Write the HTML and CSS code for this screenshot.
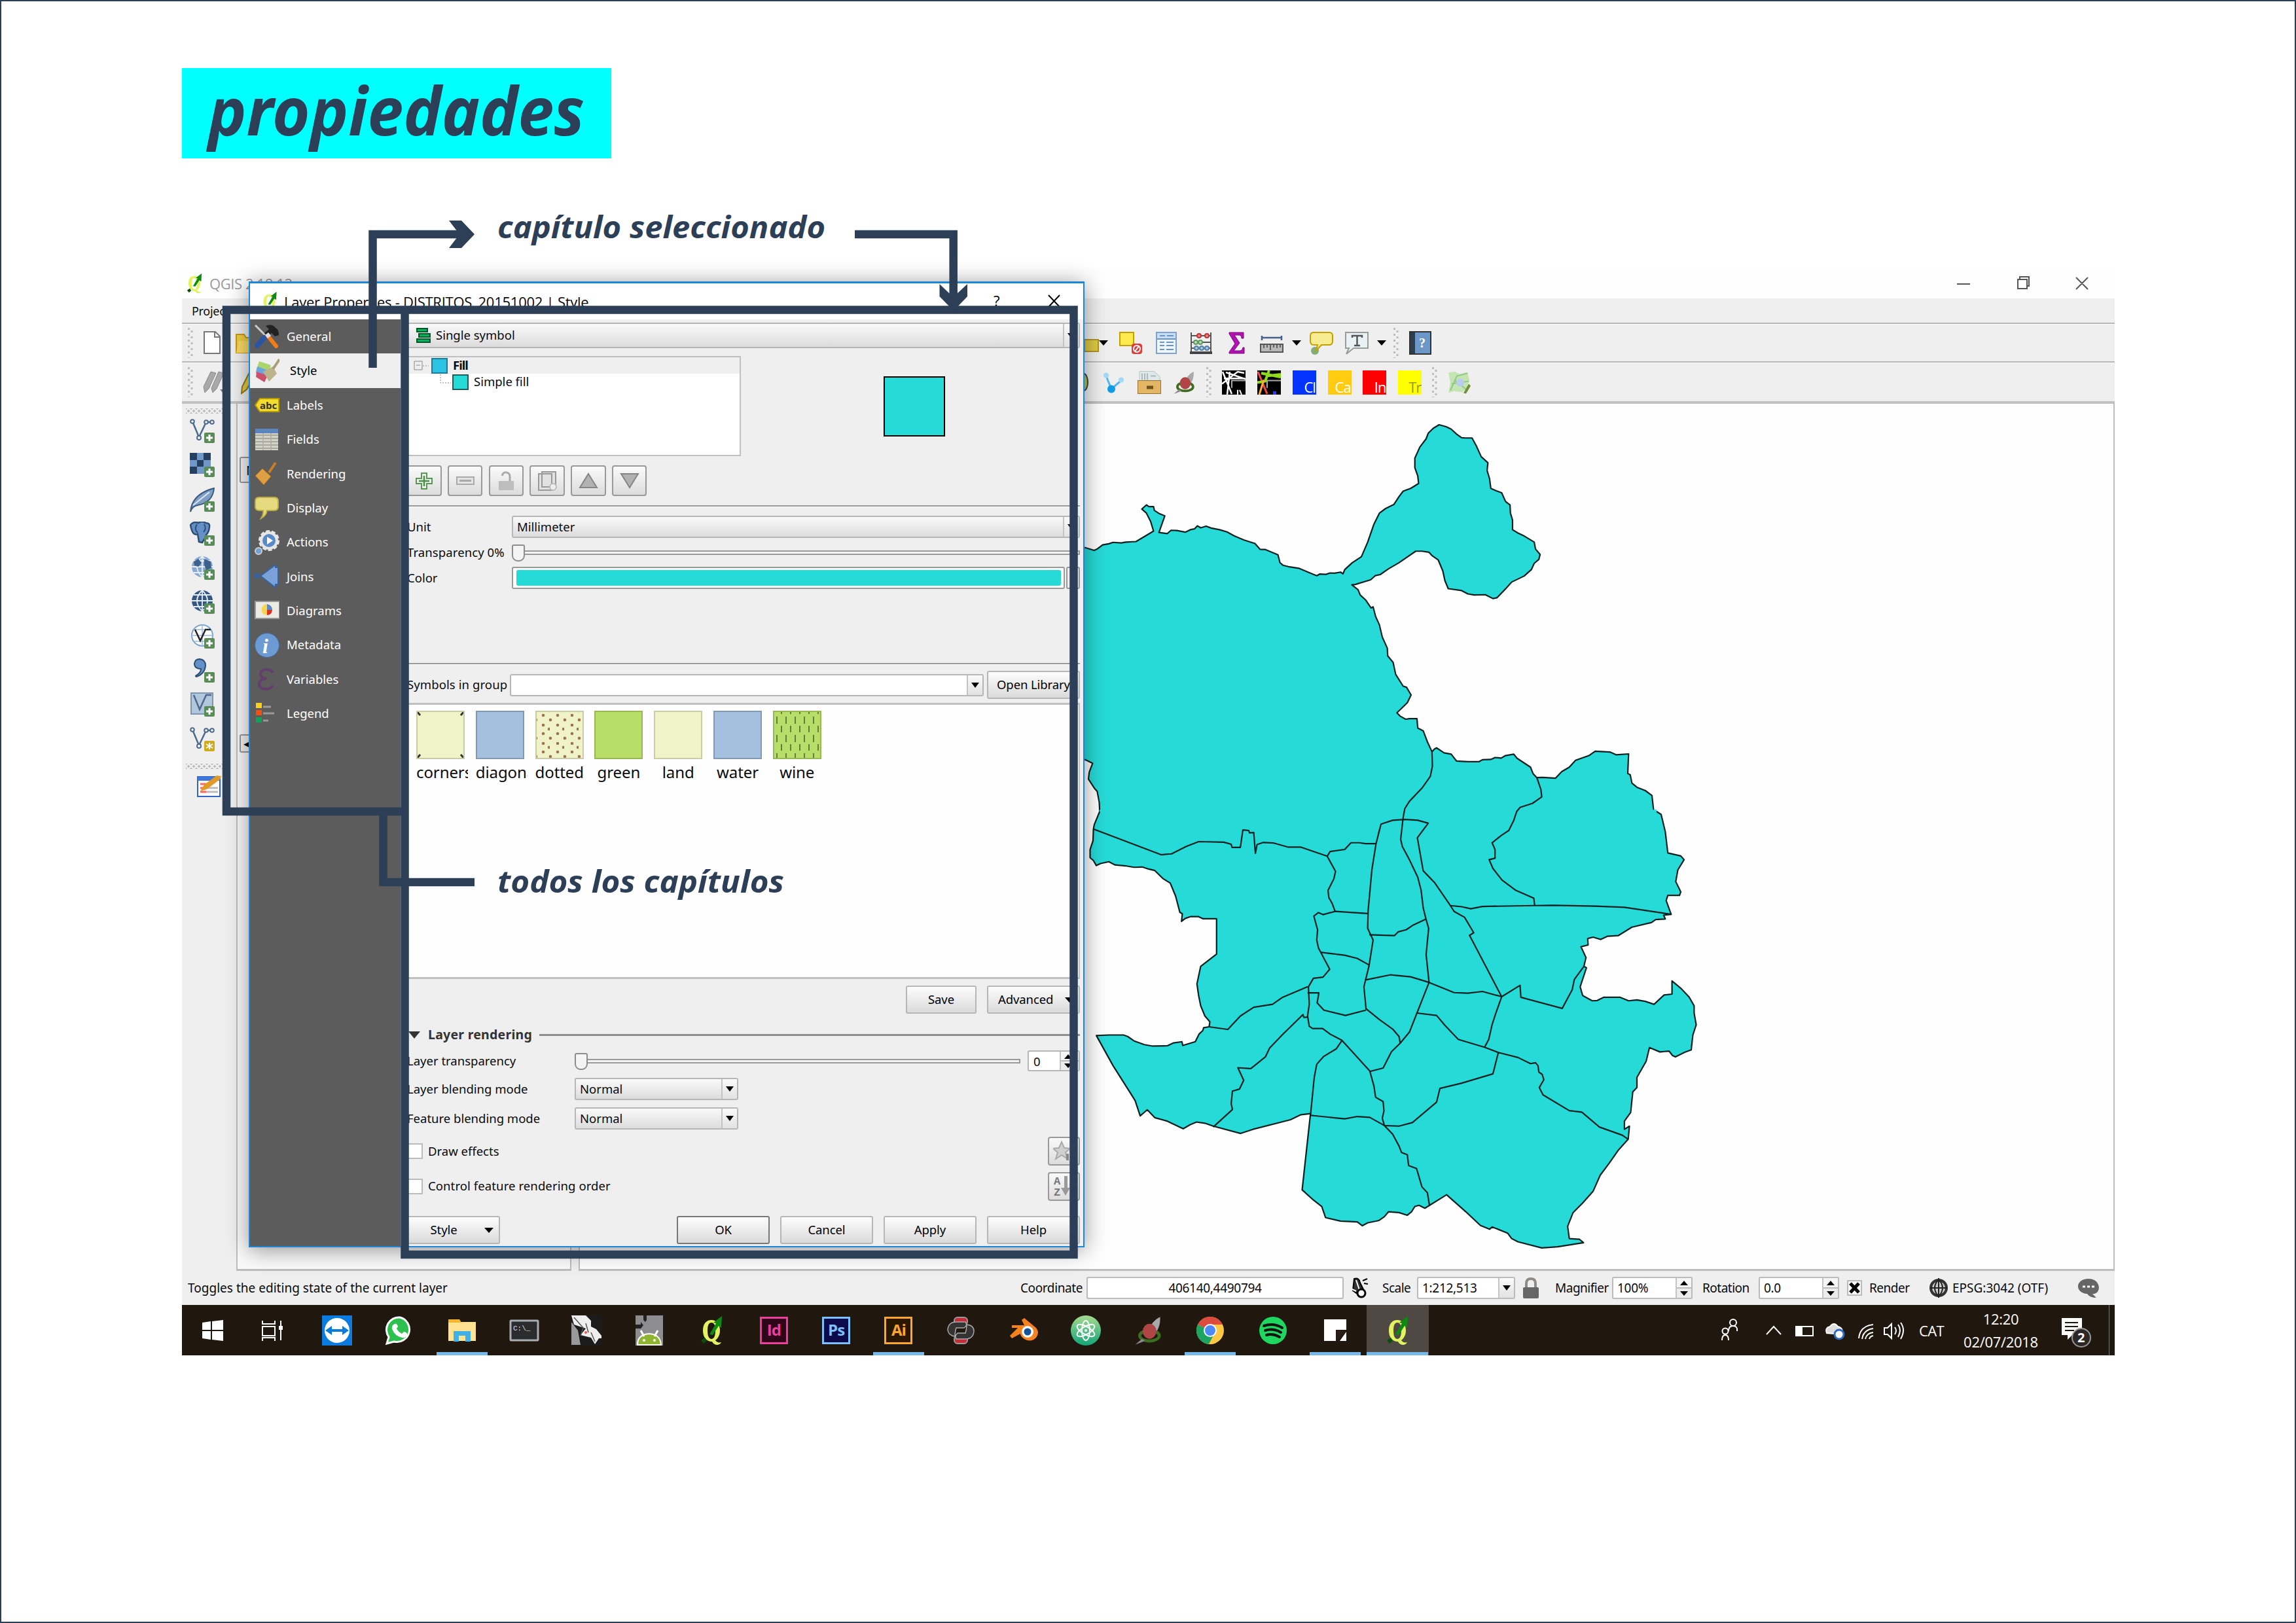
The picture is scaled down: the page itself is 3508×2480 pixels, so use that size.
FILE: index.html
```html
<!DOCTYPE html>
<html lang="es">
<head>
<meta charset="utf-8">
<title>propiedades</title>
<link rel="stylesheet" href="styles.css">
</head>
<body>
<svg class="defs" aria-hidden="true">
  <defs>
    <symbol id="plus" viewBox="0 0 16 16"><rect width="16" height="16" rx="2" fill="#5a8c5a"/><path d="M8 3v10M3 8h10" stroke="#fff" stroke-width="3"/></symbol>
    <symbol id="qgis" viewBox="0 0 36 46"><path fill-rule="evenodd" d="M18 7c8 0 13 7 13 16 0 7-3 12-7 15 2 3 5 4 9 3-3 6-11 5-14-1-9 0-14-7-14-17S10 7 18 7zM18 11c-4 0-6 4-6 12s2 13 6 13 6-5 6-13-2-12-6-12z" fill="#e4f262"/><path d="M15 29L25 12l-4-1L34 1l-1 18-4-3-9 14z" fill="#0d8a12"/><path d="M2 38l6-4 3 5-5 4z" fill="#0b4d0e"/></symbol>
    <symbol id="robin" viewBox="0 0 36 40"><path d="M18 22Q22 8 34 2q1 14-8 24z" fill="#a9a9a9"/><ellipse cx="20" cy="27" rx="13" ry="7" fill="none" stroke="#3d6e20" stroke-width="4"/><ellipse cx="20" cy="21" rx="9" ry="10" fill="#b04545"/><path d="M1 39l9-8 4 3z" fill="#888"/></symbol>
    <symbol id="handle" viewBox="0 0 10 48"><path d="M2.500 1v46" stroke="#bcbcbc" stroke-width="3" stroke-dasharray="3 6"/><path d="M7 5v42" stroke="#bcbcbc" stroke-width="3" stroke-dasharray="3 6"/></symbol>
    <symbol id="vec" viewBox="0 0 38 36"><path d="M4 4L14 28 25 5h9" fill="none" stroke="#4d6a8c" stroke-width="2.500"/><g fill="#fff" stroke="#4d6a8c" stroke-width="2"><circle cx="4" cy="4" r="2.800"/><circle cx="14" cy="29" r="3"/><circle cx="25" cy="5" r="2.800"/><circle cx="34" cy="5" r="2.800"/></g></symbol>
    <symbol id="globe" viewBox="0 0 38 36"><circle cx="19" cy="17" r="16"/><path d="M3 17h32M19 1v32M6 8h26M6 26h26M19 1q-16 16 0 32M19 1q16 16 0 32" fill="none" stroke="#e6eef8" stroke-width="1.800"/></symbol>
  </defs>
</svg>

<main class="page">
  <h1 class="title"><svg width="656" height="138"><text x="40" y="103" textLength="575" lengthAdjust="spacingAndGlyphs">propiedades</text></svg></h1>

  <section class="desktop">
    <header class="app-title">
      <svg class="app-logo" width="26" height="32"><use href="#qgis"/></svg><span>QGIS 2.18.12</span>
      <svg class="win-controls" width="260" height="36" fill="none" stroke="#555" stroke-width="2"><path d="M19 19h20M112 12h14v14h-14zM115 12v-4h14v14h-3M201 9l18 18M219 9l-18 18"/></svg>
    </header>
    <nav class="menubar">Project</nav>

    <div class="toolbar">
      <svg class="handle" width="10" height="48"><use href="#handle"/></svg>
      <svg class="first" width="30" height="38"><path d="M2 2h17l7 7v26H2z" fill="#fff" stroke="#777" stroke-width="2"/><path d="M18 2v8h8" fill="none" stroke="#777" stroke-width="2"/></svg>
      <svg class="second" width="34" height="34"><path d="M1 4h12l3 5h17v23H1z" fill="#f3cd45" stroke="#c59a22" stroke-width="2"/><path d="M5 14h28v18H1z" fill="#fbdc66"/></svg>
      <div class="tools tools-a">
        <i class="stub"></i>
        <i class="caret wide"></i>
        <span class="cell"><svg viewBox="0 0 36 36"><rect x="1" y="2" width="21" height="20" fill="#fee94e" stroke="#c4a000" stroke-width="2"/><rect x="19" y="19" width="16" height="16" rx="4" fill="#e03a3a"/><circle cx="27" cy="27" r="5" fill="none" stroke="#fff" stroke-width="2"/><path d="M24 31l6-8" stroke="#fff" stroke-width="2"/></svg></span>
        <span class="cell"><svg viewBox="0 0 36 36"><rect x="3" y="2" width="30" height="32" fill="#eef5fb" stroke="#7fa3cf" stroke-width="2"/><rect x="4" y="3" width="28" height="8" fill="#c8dff3"/><path d="M4 12h28M8 7h8M19 7h10M8 17h7M18 17h11M8 22h7M18 22h11M8 28h7M18 28h11" stroke="#6c93c6" stroke-width="2"/></svg></span>
        <span class="cell"><svg viewBox="0 0 36 36"><path d="M3 2v30M33 2v30M3 7h30M3 17h30M3 26h30" stroke="#555" stroke-width="2"/><path d="M1 33h34" stroke="#444" stroke-width="4"/><g stroke-width="2"><g fill="#e88" stroke="#b33"><circle cx="15" cy="7" r="3"/><circle cx="27" cy="7" r="3"/></g><g fill="#bdb" stroke="#5a9a5a"><circle cx="10" cy="17" r="3"/><circle cx="17" cy="17" r="3"/></g><g fill="#acd" stroke="#5580aa"><circle cx="11" cy="26" r="3"/><circle cx="19" cy="26" r="3"/><circle cx="27" cy="26" r="3"/></g></g></svg></span>
        <span class="cell"><svg viewBox="0 0 36 36"><path d="M7 2h22v9h-3q0-5-4-5h-7l8 12-9 12h9q4 0 5-5h2v9H7v-2l9-13L7 4z" fill="#b312b3" stroke="#760876"/></svg></span>
        <span class="cell"><svg viewBox="0 0 36 36"><path d="M2 10h32M3 7v7M33 7v7" stroke="#46608c" stroke-width="2.500"/><rect x="1" y="20" width="34" height="12" fill="#b8b8b8" stroke="#555" stroke-width="2"/><path d="M6 21v5M11 21v4M16 21v8M21 21v4M26 21v5M31 21v4" stroke="#444" stroke-width="1.500"/></svg></span>
        <i class="caret"></i>
        <span class="cell"><svg viewBox="0 0 36 36"><ellipse cx="8" cy="30" rx="6" ry="6" fill="#7fae7c"/><path d="M6 2h24q5 0 5 5v8q0 6-5 6H18l-8 9 2-9H6q-5 0-5-6V7q0-5 5-5z" fill="#f8ec92" stroke="#c4a000" stroke-width="2"/></svg></span>
        <span class="cell"><svg viewBox="0 0 36 36"><path d="M1 2h34v24H13L2 35l4-9H1z" fill="#e8f1f4" stroke="#9a9a9a" stroke-width="2"/><path d="M11 10V7h15v3M18.500 7v15M14 22h9" fill="none" stroke="#555" stroke-width="2.500"/></svg></span>
        <i class="caret"></i>
        <svg class="handle" width="10" height="48"><use href="#handle"/></svg>
        <span class="cell"><svg viewBox="0 0 36 36"><rect x="2" y="1" width="32" height="34" fill="#6c97c6" stroke="#333" stroke-width="2"/><path d="M3 2h7v32H3z" fill="#2c3e50"/><text x="16" y="25" class="book">?</text></svg></span>
      </div>
    </div>

    <div class="toolbar second-bar">
      <svg class="handle" width="10" height="48"><use href="#handle"/></svg>
      <svg class="first" width="36" height="38"><path d="M1 26L12 3l8 2L9 29l-6 6zM13 28L24 3l8 2-11 24-6 6z" fill="#a8a8a8" stroke="#8a8a8a"/><path d="M26 30h10l-5 6z" fill="#777"/></svg>
      <svg class="third" width="30" height="38"><path d="M4 26L16 2l8 4-13 24-8 6z" fill="#e6cb45" stroke="#8d7a20" stroke-width="2"/></svg>
      <div class="tools tools-b">
        <svg class="frag" width="8" height="30"><ellipse cx="0" cy="15" rx="6" ry="13" fill="#b5c93a" stroke="#444" stroke-width="2"/></svg>
        <span class="cell"><svg viewBox="0 0 36 36"><path d="M6 8l8 20L30 14" fill="none" stroke="#57b7ec" stroke-width="3"/><circle cx="6" cy="7" r="4" fill="#a5daf7"/><circle cx="29" cy="14" r="4" fill="#a5daf7"/><circle cx="14" cy="28" r="6" fill="#109be6"/></svg></span>
        <span class="cell"><svg viewBox="0 0 36 36"><path d="M3 1h22l9 8v9H3z" fill="#dfe8ea" stroke="#b7c4c6"/><path d="M7 4v10M11 4v10M15 4v10M20 8h8" stroke="#aab8bb" stroke-width="2"/><rect x="0.500" y="15" width="35" height="20" fill="#e3b665" stroke="#94702f"/><rect x="14" y="23" width="10" height="5" fill="#6e531f"/></svg></span>
        <span class="cell"><svg viewBox="0 0 36 40"><use href="#robin"/></svg></span>
        <svg class="handle" width="10" height="48"><use href="#handle"/></svg>
        <span class="cell"><svg viewBox="0 0 36 36" preserveAspectRatio="none"><rect width="36" height="36"/><path d="M1 2l14 33M6 3l30 10M0 20L24 2l10 2M3 12h32M8 36L12 2" stroke="#fff" stroke-width="2.500" fill="none"/><path d="M14 15h22v21H21v-9h-7z"/><path d="M36 15H15v11" fill="none" stroke="#aaa" stroke-width="2"/><path d="M24 36v-7M30 36l-3-7" stroke="#fff" stroke-width="2"/></svg></span>
        <span class="cell"><svg viewBox="0 0 36 36" preserveAspectRatio="none"><rect width="36" height="36"/><path d="M1 2l14 33" stroke="#f44" stroke-width="3"/><path d="M6 4l30 6M16 8l20-2M0 18l12-2L18 0" stroke="#8fdc1e" stroke-width="4" fill="none"/><path d="M10 14L3 36" stroke="#fa3" stroke-width="3"/><path d="M14 15h22v21H21v-9h-7z"/><path d="M36 15H15v11" fill="none" stroke="#aaa" stroke-width="2"/><path d="M24 36v-5h5v5" fill="#33f"/></svg></span>
        <span class="cell"><b class="tag cl">Cl</b></span>
        <span class="cell"><b class="tag ca">Ca</b></span>
        <span class="cell"><b class="tag in">In</b></span>
        <span class="cell"><b class="tag tr">Tr</b></span>
        <svg class="handle" width="10" height="48"><use href="#handle"/></svg>
        <span class="cell"><svg viewBox="0 0 36 36"><path d="M1 3l9-2 8 4 12-3 3 12-3 12-8 7-12-2L1 34l3-16z" fill="#c5e5b2"/><path d="M4 30L14 8l16-4M10 14l20 16M6 20l26-4" stroke="#93c987" fill="none" stroke-width="2"/><circle cx="19" cy="18" r="6" fill="#b9cdf0"/><path d="M24 34l8-14 3 3-7 12z" fill="#71903a"/></svg></span>
      </div>
    </div>

    <div class="workspace">
      <aside class="layer-tools">
        <i class="hdots"></i>
        <span><svg width="38" height="36"><use href="#vec"/></svg><svg class="badge"><use href="#plus"/></svg></span>
        <span><svg width="38" height="36"><path d="M0 0h32v32H0z" fill="#6f97c8"/><path d="M0 0h11v11H0zM21 0h11v11H21zM11 11h10v10H11zM0 21h11v11H0z" fill="#25405f"/></svg><svg class="badge"><use href="#plus"/></svg></span>
        <span><svg width="38" height="38"><path d="M1 37Q3 10 37 1q-2 22-25 26Q4 28 1 37z" fill="#7f9fc6" stroke="#3c597e" stroke-width="2"/><path d="M5 27L30 7" stroke="#dce7f4" stroke-width="2"/></svg><svg class="badge"><use href="#plus"/></svg></span>
        <span><svg width="38" height="36"><path d="M1 5q5-6 12-3 6-4 11 0 7 0 6 6-1 9-5 12v3h4l-5 4-2 0-3 5-5-1-2-12q-8 4-11-14z" fill="#6490c8" stroke="#2e4d74" stroke-width="2.500"/><path d="M11 4q-5 8 1 13M22 4q4 7-1 12" fill="none" stroke="#2e4d74" stroke-width="2"/></svg><svg class="badge"><use href="#plus"/></svg></span>
        <span><svg width="38" height="36" fill="#8aa9d1"><use href="#globe"/><path d="M6 9l7-4 5 6-5 6-6-2zM22 5l10 4 1 10-8 3-3-8z" fill="#3e608d"/></svg><svg class="badge"><use href="#plus"/></svg></span>
        <span><svg width="38" height="36" fill="#345883"><use href="#globe"/></svg><svg class="badge"><use href="#plus"/></svg></span>
        <span><svg width="38" height="36"><circle cx="19" cy="17" r="16" fill="#fff" stroke="#7ea3cf" stroke-width="2"/><path d="M3 17h32M19 1v32M6 8h26M6 26h26" stroke="#9dbce0" stroke-width="1.500"/><path d="M8 8l8 17L24 8h8" fill="none" stroke="#222" stroke-width="2.500"/></svg><svg class="badge"><use href="#plus"/></svg></span>
        <span><svg width="38" height="36"><path d="M7 8q1-7 8-7 9 1 9 10-1 13-14 17-2-1 0-2 7-4 7-10-10 0-10-8z" fill="#6490c8" stroke="#2e4d74" stroke-width="2"/></svg><svg class="badge"><use href="#plus"/></svg></span>
        <span><svg width="38" height="36"><rect x="2" y="1" width="33" height="32" fill="#b2c6dc" stroke="#7e95b0" stroke-width="2"/><path d="M6 4l9 22L25 4h8" fill="none" stroke="#4d6a8c" stroke-width="2.500"/></svg><svg class="badge"><use href="#plus"/></svg></span>
        <span><svg width="38" height="36"><use href="#vec"/></svg><svg class="badge" viewBox="0 0 16 16"><rect width="16" height="16" rx="2" fill="#d0aa1c"/><path d="M8 3v10M3 5l10 6M13 5L3 11" stroke="#fff" stroke-width="2"/></svg></span>
        <i class="hdots low"></i>
        <svg class="edit" width="38" height="36"><rect x="1" y="4" width="34" height="30" fill="#fff" stroke="#2e62c4" stroke-width="2"/><path d="M1 4h34v6H1z" fill="#3f78dc"/><path d="M5 15h9M5 21h9M5 27h9" stroke="#f66" stroke-width="3"/><path d="M16 21h16M14 27h18" stroke="#bbb" stroke-width="3"/><path d="M5 26l6-10L30 2l7 1-2 5-20 15z" fill="#e29a26"/></svg>
      </aside>
      <div class="dock"><i class="dock-btn top">N</i><i class="dock-btn low">◀</i></div>
      <div class="canvas">
        <svg class="map" viewBox="886 617 2343 1322" preserveAspectRatio="none">
          <g transform="matrix(.6378 0 0 .4209 1640 620)">
            <path d="M63 1473L62 1440 57 1400 50 1388 36 1355 38 1330 46 1298 28 1285H0V515H28L50 525 58 519 70 505 85 501 95 496 115 498 125 495 150 493 160 484 192 455 185 420 175 390 164 375 175 360 181 366 192 366 194 380 204 390 219 400 205 460 225 464 234 452 248 453 268 459 280 450 290 447 297 436 305 443 318 437 330 444 350 450 368 458 385 472 408 487 435 500 447 521 460 522 490 541 495 570 502 579 515 584 540 590 565 606 583 617 590 611 605 612 615 607 625 608 640 604 646 610 650 595 668 570 690 548 705 495 720 430 733 390 748 373 768 358 780 330 790 310 808 300 827 282 825 255 818 225 818 190 830 150 845 120 850 100 862 82 876 69 893 76 905 85 918 103 930 116 940 117 955 117 965 145 977 185 993 207 991 235 997 265 1000 300 1012 308 1026 316 1035 347 1046 360 1047 390 1052 415 1052 450 1065 462 1080 473 1104 495 1107 520 1118 540 1115 558 1104 572 1097 595 1080 618 1050 640 1035 665 1015 697 1005 700 987 686 960 687 945 683 930 671 898 664 890 635 885 600 874 560 860 545 852 532 835 528 820 528 780 570 755 592 735 613 723 617 712 632 675 649 667 650 682 668 687 687 700 705 713 734 718 730 724 765 733 795 740 840 752 880 753 908 766 932 772 975 790 1018 798 1022 809 1050 800 1078 775 1115 783 1127 796 1138 805 1136 823 1136 825 1170 838 1180 848 1220 859 1256 865 1246 870 1242 888 1260 905 1265 918 1290 945 1292 972 1292 980 1285 1000 1284 1010 1277 1025 1279 1035 1270 1055 1265 1063 1280 1095 1312 1101 1335 1110 1350 1125 1349 1155 1352 1170 1328 1188 1312 1203 1287 1235 1270 1250 1254 1285 1257 1300 1267 1330 1264 1328 1335 1334 1340 1338 1370 1350 1385 1370 1397 1386 1415 1390 1470 1397 1473"/>
          </g>
          <g transform="matrix(.6378 0 0 .4464 1640 1240)">
            <path class="seam" d="M63-6H1397V10H60z"/>
            <path d="M63 0L50 45 48 60 47 100 40 130 40 158 48 168 55 185 65 178 85 172 100 183 125 186 145 191 165 190 180 197 195 202 215 230 232 245 245 290 255 345 261 350 259 376 268 366 280 360 300 360 310 367 343 367V488L305 530 296 590 300 630 305 665 315 700 327 720 325 737 312 740 310 750 301 762 292 788 262 801 260 788 240 792 225 802 190 803 170 798 145 785 130 770 120 765 85 765 55 767 95 870 135 960 148 990 160 1042 177 1021 195 1048 225 1060 263 1086 280 1072 295 1063 315 1067 335 1077 400 1102 430 1088 520 1055 545 1038 568 1034 548 1295 575 1330 595 1352 604 1390 640 1402 680 1405 692 1418 705 1408 732 1400 745 1387 755 1370 780 1373 800 1382 810 1370 818 1352 828 1348 842 1358 894 1312 940 1370 975 1417 997 1430 1003 1422 1040 1443 1050 1462 1065 1473 1122 1494 1160 1490 1222 1476 1212 1464 1188 1462 1184 1420 1197 1373 1220 1340 1245 1300 1262 1245 1283 1205 1305 1160 1329 1122 1332 1077 1320 1088 1320 1060 1335 1030 1340 960 1350 945 1350 910 1372 855 1380 808 1405 823 1427 820 1435 835 1442 840 1465 824 1480 816 1484 765 1492 730 1487 690 1487 665 1475 635 1455 605 1434 580 1434 625 1415 628 1391 660 1370 650 1350 645 1330 648 1310 636 1270 636 1255 647 1243 648 1220 630 1214 600 1229 535 1223 530 1228 500 1216 463 1233 457 1232 435 1245 430 1263 438 1280 427 1305 425 1338 396 1385 380 1395 370 1418 368 1414 355 1432 352 1420 305 1424 287 1452 287 1455 275 1443 240 1448 200 1463 165 1455 152 1424 142 1418 70 1408 10 1397 0"/>
            <g class="borders">
              <path d="M48 60L210 148 235 145 270 120 300 103 360 105 378 112 380 123 400 123 406 63 420 65 422 73 432 72 436 143 440 113 455 106 480 108 515 122 545 122 608 153"/>
              <path d="M725 110H700L685 107 665 107 650 130 615 137 608 153 628 205 624 230 610 270 612 295 620 315 627 342 598 353 587 346 576 358 585 405 583 440 587 467 614 540 598 567 575 571 563 600 565 660 561 700 565 735 573 743 597 743 615 762 643 783 710 888 720 940 724 978 742 993 744 1025 740 1050 745 1075 765 1105 780 1145 786 1167 800 1175 803 1212 822 1222 835 1285 848 1305 853 1348"/>
              <path d="M859-205L860-155 855-120 835-80 805-35 794-10 790 20 784 95 788 120 805 165 825 225 833 270 838 330 845 370 851 400 845 490 852 585 823 690 805 755 783 793 762 822 742 878 710 890"/>
              <path d="M1110-117L1120-75 1122-50 1100-28 1070-14 1062 0 1055 30 1043 65 1025 82 1003 107 1010 130 1010 160 996 165 1005 195 1027 235 1060 270 1103 297 1105 322"/>
              <path d="M903 322L930 326 952 333 980 325 1105 322 1150 321 1250 324 1320 328 1432 352M730 80L737 43 765 30 795 27 825 30 850 40 824 90 838 203 865 243 903 322 912 342 937 362 959 415 949 424 1026 634M737 43L725 110 715 200 706 340 705 400 718 440 708 530 696 600 701 675 733 712 765 745 780 770 783 793"/>
              <path d="M627 342L705 349M709 422L769 425 778 412 797 405 815 388 845 368M592 482L650 492 680 503 708 525M698 577L760 559 808 566 852 585 912 620 945 622 980 616 1026 634 1070 595 1072 636 1171 674 1195 610 1200 575 1223 530M561 621H588L584 655 600 680 652 698 701 680M325 737L370 746 400 700 432 670 477 660 500 637 561 600M561 704L552 705 550 695 500 765 470 810 460 840 425 880 394 877 408 920 398 950 381 957 378 1000 381 1020 335 1080M643 785L630 812 600 838 583 865 577 910 568 1040 650 1052 680 1044 710 1047 745 1075 780 1077 812 1065 870 995 878 948 930 930 1005 898 1018 825M823 690L870 698 890 732 922 780 985 807 1018 825 1065 842 1095 863 1107 860 1113 870 1115 892 1123 900 1127 918 1116 945 1125 970 1188 1024 1218 1029 1260 1080 1315 1108 1329 1122M1026 634L1012 690 1003 730 995 780 985 807"/>
            </g>
          </g>
        </svg>
      </div>
    </div>

    <footer class="status">
      <span class="hint">Toggles the editing state of the current layer</span>
      <span class="s-coord">Coordinate</span><b class="field f-coord">406140,4490794</b>
      <svg class="mouse" width="32" height="32"><path d="M9 2q8-2 9 6l5 10-8 8-8-6z" fill="#333" stroke="#000" stroke-width="2"/><path d="M12 4l6 18M4 17l8 4" stroke="#fff" stroke-width="2"/><circle cx="20" cy="24" r="6" fill="#fff" stroke="#000" stroke-width="3"/><path d="M22 5l7-3M24 9l6 1" stroke="#000" stroke-width="2"/></svg>
      <span class="s-scale">Scale</span><b class="field f-scale">1:212,513<i class="drop"></i></b>
      <svg class="lock" width="24" height="32"><path d="M5 16V9q0-7 7-7t7 7v7" fill="none" stroke="#8d8d86" stroke-width="4"/><rect y="15" width="24" height="17" rx="2" fill="#666"/></svg>
      <span class="s-mag">Magnifier</span><b class="field f-mag">100%<i class="spin"></i></b>
      <span class="s-rot">Rotation</span><b class="field f-mag">0.0<i class="spin"></i></b>
      <svg class="check" width="23" height="24"><rect x="1" y="1" width="21" height="22" fill="#fff" stroke="#bbb" stroke-width="2"/><path d="M5 5l13 14M18 5L5 19" stroke="#000" stroke-width="5"/></svg><span class="s-render">Render</span>
      <svg class="crs" width="30" height="32"><circle cx="15" cy="16" r="12" fill="#ccc" stroke="#333" stroke-width="4"/><path d="M15 1v30M2 16h26M15 3q-12 13 0 26M15 3q12 13 0 26" fill="none" stroke="#222" stroke-width="2"/></svg>
      <span class="s-epsg">EPSG:3042 (OTF)</span>
      <svg class="bubble" width="32" height="32"><path d="M16 2c20 0 20 24 6 23l6 6q-10 0-14-6C-5 24-5 2 16 2z" fill="#666"/><path d="M7 14h4M14 14h4M21 14h4" stroke="#fff" stroke-width="3"/></svg>
    </footer>

    <div class="taskbar">
      <div class="apps">
        <span><svg viewBox="0 0 46 46"><path d="M7 11l13-2v13H7zM22 9l17-2v15H22zM7 24h13v13L7 35zM22 24h17v15l-17-2z" fill="#fff"/></svg></span>
        <span><svg viewBox="0 0 46 46"><path d="M4 8v5h19V8M4 17h19v14H4zM4 39v-5h19v5M32 8v30" fill="none" stroke="#fff" stroke-width="2"/><path d="M29 16h6v6h-6z" fill="#fff"/></svg></span>
        <span><svg viewBox="0 0 46 46"><rect width="46" height="46" fill="#0b7be0"/><circle cx="23" cy="23" r="19" fill="#fff"/><path d="M5 23l10-7v5h16v-5l10 7-10 7v-5H15v5z" fill="#0b7be0"/></svg></span>
        <span><svg viewBox="0 0 46 46"><path d="M23 3a19 19 0 1 1-9 37L3 43l3-10A19 19 0 0 1 23 3z" fill="#2cc14e" stroke="#fff" stroke-width="3"/><path d="M15 13q3-2 5 4l-2 3q2 5 8 8l3-3q6 1 5 5-2 5-8 4-12-3-15-14-1-5 4-7z" fill="#fff"/></svg></span>
        <span class="on"><svg viewBox="0 0 46 46"><path d="M2 6h16l3 4h23v29H2z" fill="#ffe391"/><path d="M2 6h17l3 5H2z" fill="#f5b72a"/><path d="M10 40V24h26v16h-8v-9H18v9z" fill="#3fb1e6"/></svg></span>
        <span><svg viewBox="0 0 46 46"><rect x="2" y="8" width="42" height="30" rx="1" fill="#2b2c2e" stroke="#a9adb3" stroke-width="3"/><text x="6" y="23" class="cmd">C:\_</text></svg></span>
        <span><svg viewBox="0 0 46 46"><rect width="46" height="46" fill="#1b1b1b"/><path d="M0 0h22l8 8 0 9 8 4 8 10v4h-4l-6 9-6-10-16-4 8-10L4 14z" fill="#eee"/><path d="M0 10l10 13 4 22H0z" fill="#999"/><path d="M4 3l14 16-4 12M22 12l4 14M30 26l6 14" stroke="#555" fill="none" stroke-width="1.500"/><circle cx="22" cy="26" r="2" fill="#e55"/></svg></span>
        <span><svg viewBox="0 0 46 46"><rect x="2" width="42" height="46" fill="#8d8d90"/><path d="M2 14h8v-4l4 5-4 5H2zM14 0h5v7l-2 3-3-3z" fill="#222"/><path d="M5 45q0-16 18-17 17 1 18 17z" fill="#8fb52f" stroke="#fff" stroke-width="2"/><path d="M10 23l5 9M36 23l-5 9" stroke="#fff" stroke-width="3"/><circle cx="15" cy="38" r="2" fill="#fff"/><circle cx="31" cy="38" r="2" fill="#fff"/></svg></span>
        <span><svg viewBox="0 0 36 46"><use href="#qgis"/></svg></span>
        <span><b class="adobe id">Id</b></span>
        <span><b class="adobe ps">Ps</b></span>
        <span class="on"><b class="adobe ai">Ai</b></span>
        <span><svg viewBox="0 0 46 46"><rect x="13" y="3" width="20" height="12" rx="5" fill="#c62b37" stroke="#999" stroke-width="2"/><rect x="13" y="31" width="20" height="12" rx="5" fill="#c62b37" stroke="#999" stroke-width="2"/><path d="M3 22q1-12 13-12h14q4 5-2 9H16q-2 6-2 13-10-1-11-10zM43 24q-1 12-13 12H16q-3-5 2-9h12q2-6 2-13 11 1 11 10z" fill="#343434" stroke="#aaa" stroke-width="1.500"/></svg></span>
        <span><svg viewBox="0 0 46 46"><path d="M24 4l18 15q6 7 0 15-8 8-18 2-6-4-6-8L5 35l-3-4 12-12H5v-4h19l-4-8z" fill="#f5821f"/><circle cx="29" cy="25" r="9" fill="#fff"/><circle cx="29" cy="25" r="5.500" fill="#14539c"/></svg></span>
        <span><svg viewBox="0 0 46 46"><defs><linearGradient id="atom" x2="0" y2="1"><stop stop-color="#a5db8f"/><stop offset="1" stop-color="#12a578"/></linearGradient></defs><circle cx="23" cy="23" r="23" fill="url(#atom)"/><g fill="none" stroke="#fff" stroke-width="2"><ellipse cx="23" cy="23" rx="6" ry="15"/><ellipse cx="23" cy="23" rx="6" ry="15" transform="rotate(60 23 23)"/><ellipse cx="23" cy="23" rx="6" ry="15" transform="rotate(120 23 23)"/></g><circle cx="23" cy="23" r="2" fill="#fff"/></svg></span>
        <span><svg viewBox="0 0 36 40"><use href="#robin"/></svg></span>
        <span class="on"><svg viewBox="0 0 46 46"><circle cx="23" cy="23" r="21" fill="#fdc843"/><path d="M23 23L4 14A21 21 0 0 1 42 14H23z" fill="#dd4b3e"/><path d="M4 14a21 21 0 0 0 17 30l9-17-7-4z" fill="#1da362"/><path d="M21 44l9-17 1-13h11L30 43z" fill="#fdc843"/><circle cx="23" cy="23" r="10" fill="#fff"/><circle cx="23" cy="23" r="8" fill="#4c8bf5"/></svg></span>
        <span><svg viewBox="0 0 46 46"><circle cx="23" cy="23" r="21" fill="#1ed760"/><path d="M9 16q15-5 28 3M11 23q12-4 24 3M13 30q10-3 20 3" fill="none" stroke="#14140f" stroke-width="4" stroke-linecap="round"/></svg></span>
        <span class="on"><svg viewBox="0 0 46 46"><path d="M6 6h34v16H24v17H6z" fill="#fff"/><path d="M25 39V23h15z" fill="#2a1f18"/><path d="M30 39l10-14v14z" fill="#fff"/></svg></span>
        <span class="active"><svg viewBox="0 0 36 46"><use href="#qgis"/></svg></span>
      </div>
      <div class="tray">
        <svg class="glyphs" width="300" height="46" fill="none" stroke="#fff" stroke-width="2">
          <path d="M4 38q0-8 5-8t5 8M14 24q0-8 7-8t6 8"/><circle cx="9" cy="24" r="4.500"/><circle cx="21" cy="11" r="5"/>
          <path d="M72 29l11-12 11 12M117 17h26v14h-26z"/><path d="M118 18h8v12h-8z" fill="#fff"/>
          <path d="M164 27q-3-8 5-10 6-8 12 0 9 2 6 12z" fill="#ddd"/><circle cx="183" cy="29" r="7" fill="#fff" stroke="#2f6ac4" stroke-width="3"/>
          <path d="M213 35q2-19 22-21M218 36q2-14 17-16M223 36q2-9 12-10M229 36q1-4 6-5M252 19h5l6-6v22l-6-6h-5zM268 18q4 5 0 11M273 14q6 8 0 19M277 11q8 11 0 25"/>
        </svg>
        <span class="lang">CAT</span>
        <time class="clock"><span>12:20</span><span>02/07/2018</span></time>
        <svg class="notes" width="50" height="50"><path d="M1 2h31v26H17l-7 7v-7H1z" fill="#fff"/><path d="M6 9h20M6 15h20M6 21h14" stroke="#1f160f" stroke-width="2"/><circle cx="31" cy="32" r="14" fill="#2b2725" stroke="#999" stroke-width="2"/><text x="25" y="39" class="count">2</text></svg>
        <i class="peek"></i>
      </div>
    </div>

    <section class="dialog">
      <header class="dlg-title"><svg width="25" height="32"><use href="#qgis"/></svg><span>Layer Properties - DISTRITOS_20151002 | Style</span><svg class="dlg-x" width="110" height="24"><text x="0" y="19" class="help">?</text><path d="M84 2l17 18M101 2L84 20" stroke="#000" stroke-width="2"/></svg></header>
      <div class="dlg-main">
        <nav class="chapters">
          <a><svg viewBox="0 0 38 38"><path d="M1 2l16 16" stroke="#ccc" stroke-width="3"/><path d="M15 21L4 33" stroke="#2b55a0" stroke-width="8" stroke-linecap="round"/><path d="M20 18l13 16" stroke="#f07d17" stroke-width="6" stroke-linecap="round"/><path d="M15 14l7-6-5-5q10-4 15 3 5 2 5 11l-6 2-5-5-7 5z" fill="#222"/><path d="M16 17l5-4 4 5-5 4z" fill="#ddd"/></svg>General</a>
          <a class="sel"><svg viewBox="0 0 38 38"><path d="M7 4l18 6-5 14L2 19z" fill="#a9d66c"/><path d="M4 12l17 6-3 10-16-6z" fill="#6aa5de"/><path d="M3 20l17 6-5 10-13-8z" fill="#c9516b"/><path d="M13 20l15-8 6 11-12 12z" fill="#bdb48d"/><path d="M28 16L38 1" stroke="#a89f76" stroke-width="4"/></svg>Style</a>
          <a><svg viewBox="0 0 38 38"><path d="M1 19l7-10h29v20H8z" fill="#f3dc2b" stroke="#b49a06" stroke-width="2"/><text x="8" y="25" class="abc">abc</text></svg>Labels</a>
          <a><svg viewBox="0 0 38 38"><rect x="1" y="3" width="35" height="33" fill="#d3d3c8"/><path d="M1 3h35v7H1z" fill="#5c85bd"/><path d="M1 13h35M1 18h35M1 23h35M1 28h35M1 33h35" stroke="#9a9a90" stroke-width="1.500"/><path d="M13 10v26M25 10v26" stroke="#aaa" stroke-width="1.500"/></svg>Fields</a>
          <a><svg viewBox="0 0 38 38"><path d="M32 2L22 17" stroke="#c87d22" stroke-width="4"/><path d="M12 11l13 12-11 13L1 22z" fill="#dfa044" stroke="#a86a1c"/></svg>Rendering</a>
          <a><svg viewBox="0 0 38 38"><path d="M7 3h23q6 0 6 6v8q0 6-6 6H19q-1 8-9 12 4-6 3-12H7q-6 0-6-6V9q0-6 6-6z" fill="#e6da7f" stroke="#bfae46" stroke-width="2"/></svg>Display</a>
          <a><svg viewBox="0 0 38 38"><circle cx="22" cy="16" r="12" fill="#5989c6" stroke="#e6e6e6" stroke-width="4"/><circle cx="22" cy="16" r="14.500" fill="none" stroke="#e6e6e6" stroke-width="3" stroke-dasharray="6 3"/><path d="M19 10v12l9-6z" fill="#fff"/><circle cx="6" cy="32" r="5" fill="#6ea0da" stroke="#ccc" stroke-width="2"/></svg>Actions</a>
          <a><svg viewBox="0 0 38 38"><circle cx="3" cy="18" r="4.500" fill="#3465a4"/><path d="M9 18L32 1v4h4v26h-4v5z" fill="#7ba2d8" stroke="#3465a4" stroke-width="2"/></svg>Joins</a>
          <a><svg viewBox="0 0 38 38"><rect x="1" y="5" width="37" height="26" fill="#eceae4" stroke="#999" stroke-width="2"/><path d="M19 9v17a8.500 8.500 0 0 1 0-17" fill="#f5d64c"/><path d="M19 9q8 2 8 9h-8z" fill="#5b88c0"/><path d="M19 18h8q-1 8-8 8z" fill="#dc3226"/></svg>Diagrams</a>
          <a><svg viewBox="0 0 38 38"><circle cx="19" cy="19" r="18.500" fill="#6c9ad3" stroke="#47699a"/><text x="12" y="31" class="info">i</text></svg>Metadata</a>
          <a><svg viewBox="0 0 38 38"><path d="M28 9q-3-5-10-5-9 1-9 7 0 6 9 7-11 1-11 8 0 8 11 8 8-1 10-6" fill="none" stroke="#63406c" stroke-width="4"/></svg>Variables</a>
          <a><svg viewBox="0 0 38 38"><path d="M2 3h9v8H2z" fill="#fcd01c"/><path d="M2 14h9v8H2z" fill="#f4500f"/><path d="M2 25h9v8H2z" fill="#09a558"/><path d="M13 9h12M13 19h17M13 30h8" stroke="#999" stroke-width="3"/></svg>Legend</a>
        </nav>
        <div class="content">
          <div class="combo r-symbol"><svg width="22" height="24" fill="#08b25a" stroke="#04572b" stroke-width="2"><path d="M1 1h16v5H1zM4 9h17v5H4zM1 17h20v5H1z"/></svg>Single symbol<i class="drop"></i></div>
          <div class="r-tree">
            <div class="tree">
              <div class="t1"><svg width="25" height="24" fill="none" stroke="#888"><path d="M1 5h12v13H1zM4 11h6"/><path d="M14 12h9" stroke-dasharray="2"/></svg><i class="sw blue"></i>Fill</div>
              <div class="t2"><svg width="17" height="24" fill="none" stroke="#888" stroke-dasharray="2"><path d="M1 0v13h16"/></svg><i class="sw"></i>Simple fill</div>
            </div>
            <i class="preview"></i>
          </div>
          <div class="r-btns">
            <i class="btn"><svg width="32" height="32"><path d="M12 4h8v8h8v8h-8v8h-8v-8H4v-8h8z" fill="#e7f3e7" stroke="#5c9458" stroke-width="2"/><path d="M16 8v16M8 16h16" stroke="#4f8f4c" stroke-width="2.500"/></svg></i>
            <i class="btn"><svg width="32" height="32"><path d="M3 10h26v11H3z" fill="#e4e4e4" stroke="#aaa" stroke-width="2"/><path d="M7 15.500h18" stroke="#aaa" stroke-width="3"/></svg></i>
            <i class="btn"><svg width="32" height="32"><path d="M10 8q2-6 7-5 5 1 5 6v8" fill="none" stroke="#aaa" stroke-width="3"/><rect x="5" y="16" width="23" height="14" fill="#bdbdbd"/></svg></i>
            <i class="btn"><svg width="32" height="32" fill="#e2e2e2" stroke="#999" stroke-width="2"><path d="M3 5h20v25H3zM8 2h21v23H8z"/><circle cx="25" cy="25" r="5" fill="#eee" stroke="#bbb"/></svg></i>
            <i class="btn"><svg width="32" height="32"><path d="M16 5l13 21H3z" fill="#b2b2b2" stroke="#858585" stroke-width="2"/></svg></i>
            <i class="btn"><svg width="32" height="32"><path d="M16 26L29 5H3z" fill="#b2b2b2" stroke="#858585" stroke-width="2"/></svg></i>
          </div>
          <hr class="h1">
          <div class="row r-unit"><label>Unit</label><div class="combo">Millimeter<i class="drop"></i></div></div>
          <div class="row r-trans"><label>Transparency 0%</label><i class="slider"></i></div>
          <div class="row r-color"><label>Color</label><div class="colorbtn"><i></i></div><b class="mini"></b></div>
          <hr class="h2">
          <div class="row r-group"><label class="grp">Symbols in group</label><div class="combo white"><i class="drop"></i></div><button class="push lib">Open Library</button></div>
          <div class="symbols">
            <figure><svg width="74" height="74"><path d="M0 0l6 7M74 0l-6 7M0 74l6-7M74 74l-6-7" stroke="#333" stroke-width="3"/></svg><figcaption>corners</figcaption></figure>
            <figure class="w"><svg width="74" height="74"></svg><figcaption>diagonal</figcaption></figure>
            <figure><svg width="74" height="74"><defs><pattern id="dots" width="22" height="28" patternUnits="userSpaceOnUse"><g fill="#9b7256"><circle cx="1" cy="14" r="2.300"/><circle cx="23" cy="14" r="2.300"/><circle cx="12" cy="7" r="2.300"/><circle cx="21" cy="0" r="2.300"/><circle cx="21" cy="28" r="2.300"/><circle cx="12" cy="22" r="2.300"/></g></pattern></defs><rect width="74" height="74" fill="url(#dots)"/></svg><figcaption>dotted</figcaption></figure>
            <figure class="g"><svg width="74" height="74"></svg><figcaption>green</figcaption></figure>
            <figure><svg width="74" height="74"></svg><figcaption>land</figcaption></figure>
            <figure class="w"><svg width="74" height="74"></svg><figcaption>water</figcaption></figure>
            <figure class="g"><svg width="74" height="74"><defs><pattern id="vines" width="14" height="28" patternUnits="userSpaceOnUse"><path d="M6 9v11M13 0v5M13 23v5" stroke="#44602a" stroke-width="1.500"/></pattern></defs><rect width="74" height="74" fill="url(#vines)"/></svg><figcaption>wine</figcaption></figure>
          </div>
          <div class="row r-save"><button class="push save">Save</button><button class="push adv">Advanced<i class="caret"></i></button></div>
          <div class="row r-head"><i class="tri"></i><b>Layer rendering</b><hr></div>
          <div class="row r-lt"><label class="wide">Layer transparency</label><i class="slider"></i><div class="spinbox">0<i class="spin"></i></div></div>
          <div class="row r-lb"><label class="wide">Layer blending mode</label><div class="combo">Normal<i class="drop"></i></div></div>
          <div class="row r-fb"><label class="wide">Feature blending mode</label><div class="combo">Normal<i class="drop"></i></div></div>
          <div class="row r-de"><i class="box"></i>Draw effects<i class="btn"><svg width="34" height="36"><path d="M13 4l4 9 9 1-7 6 3 10-9-6-9 6 3-10-7-6 9-1z" fill="#d0d0d0" stroke="#aaa" stroke-width="2"/><path d="M22 22v10" stroke="#888" stroke-width="4"/></svg></i></div>
          <div class="row r-cf"><i class="box"></i>Control feature rendering order<i class="btn"><svg width="34" height="38"><text x="1" y="16" class="az">A</text><text x="1" y="33" class="az">Z</text><path d="M17 3v18h-5l7 12 7-12h-4V3z" fill="#999"/></svg></i></div>
          <div class="row r-end"><button class="push style">Style<i class="caret"></i></button><button class="push ok">OK</button><button class="push">Cancel</button><button class="push">Apply</button><button class="push help-b">Help</button></div>
        </div>
      </div>
    </section>
  </section>

  <svg class="notes-layer" viewBox="0 0 3508 2480">
    <g fill="none" stroke="#2d3e57" stroke-width="12.500">
      <path d="M346 473.500H618.500V1240H346zM618.500 473.500H1640.500V1917H618.500zM569.500 562V358H712M1306 358H1456.700V460M585.500 1240V1348H725"/>
    </g>
    <path d="M686 337h19l20 21-20 21h-19l16-21zM1435.500 434l21 20 21.500-20v19l-21 22-21.500-22z" fill="#2d3e57"/>
    <text x="760" y="364" textLength="501" lengthAdjust="spacingAndGlyphs">capítulo seleccionado</text>
    <text x="760" y="1364" textLength="438" lengthAdjust="spacingAndGlyphs">todos los capítulos</text>
  </svg>
</main>
</body>
</html>
```
FILE: styles.css
```css
* { box-sizing: border-box; }
body { margin: 0; background: #fff; font: 19px/1 "Noto Sans", "Open Sans", sans-serif; color: #0a0a0a; }
i, b { font-style: normal; font-weight: normal; display: block; }
svg { display: block; flex: none; }
.defs { position: absolute; width: 0; height: 0; }
.page { position: relative; width: 3508px; height: 2480px; padding: 102px 0 0 276px; border: 2px solid #2d3e57; overflow: hidden; }
.title { margin: 0; width: 656px; height: 138px; background: #0ff; }
.title text { font: italic bold 102px "Noto Sans", sans-serif; fill: #2d3e57; }
.notes-layer { position: absolute; left: -2px; top: -2px; width: 3508px; height: 2480px; }
.notes-layer text { font: italic bold 47px "Noto Sans", sans-serif; fill: #2d3e57; }

/* application window */
.desktop { position: relative; margin-top: 168px; width: 2953px; height: 1661px; background: #fefefe; display: flex; flex-direction: column; }
.app-title { height: 46px; display: flex; align-items: center; padding-left: 6px; color: #999; font: 22px/1 "Open Sans", sans-serif; }
.app-title span { margin-left: 10px; letter-spacing: -.4px; }
.win-controls { margin-left: auto; }
.menubar { height: 39px; background: #efefef; border-bottom: 2px solid #b8b8b8; padding: 10px 0 0 15px; font-size: 18px; letter-spacing: -.3px; }
.toolbar { height: 59px; background: #efefef; border-top: 1px solid #fff; border-bottom: 2px solid #b8b8b8; display: flex; align-items: center; padding-left: 8px; }
.second-bar { height: 63px; border-bottom: 4px solid #c0c0c0; }
.first { margin-left: 14px; }
.second, .third { margin-left: 20px; }
.tools { display: flex; align-items: center; }
.tools-a { margin-left: 1262px; }
.tools-b { margin-left: 1260px; }
.stub { width: 23px; height: 20px; margin-top: 8px; background: #dfca45; border: 2px solid #b0942a; }
.frag { margin-right: 11px; }
.cell { width: 53.8px; display: flex; justify-content: center; flex: none; }
.cell svg { width: 36px; height: 36px; }
.tools .handle { margin: 0 6px; }
.caret { width: 0; height: 0; border: 7px solid transparent; border-top: 8px solid #000; border-bottom: 0; flex: none; margin: 0 4px; }
.caret.wide { margin: 0 8px 0 0; }
.tools-a .caret.wide { margin-left: 0; }
.book { font: bold 20px "Liberation Serif", serif; fill: #fff; }
.tag { width: 36px; height: 37px; padding: 14px 1px 0 0; text-align: right; color: #fff; font: 22px/22px "Open Sans", sans-serif; letter-spacing: -1px; }
.cl { background: #0433ff; }
.ca { background: #ffcc11; }
.in { background: #f00; }
.tr { background: #ff0; color: #999a30; }
.tools-b .cell svg { height: 37px; }

.workspace { height: 1325px; display: flex; background: #efefef; }
.layer-tools { width: 83px; padding: 7px 0 0 12px; }
.layer-tools span { display: block; position: relative; height: 52.3px; }
.layer-tools .badge { position: absolute; left: 22px; top: 21px; width: 16px; height: 16px; }
.hdots { width: 66px; height: 8px; margin: 0 0 8px -6px; background: radial-gradient(circle, #bbb 1.5px, transparent 2px) 0 0/8px 8px, radial-gradient(circle, #bbb 1.5px, transparent 2px) 4px 4px/8px 8px; }
.hdots.low { margin-top: 4px; margin-bottom: 8px; }
.edit { margin-left: 11px; }
.dock { width: 512px; border: solid #bdbdbd; border-width: 0 2px 3px 2px; background: #fafafa; }
.dock-btn { width: 40px; height: 40px; margin-left: 3px; border: 2px solid #999; border-radius: 3px; background: #f3f3f3; font-size: 20px; padding: 9px 0 0 8px; }
.dock-btn.top { margin-top: 81px; }
.dock-btn.low { height: 28px; margin-top: 384px; padding: 2px 0 0 4px; }
.canvas { width: 2347px; margin-left: 11px; border: solid #bdbdbd; border-width: 0 2px 3px 2px; background: #fefefe; }
.map { width: 2343px; height: 1322px; }
.map path { fill: #26dad7; stroke: #0b1f1f; stroke-width: 2.2; vector-effect: non-scaling-stroke; stroke-linejoin: round; }
.map .seam { stroke: none; }
.map .borders path { fill: none; }

.status { height: 52px; background: #efefef; display: flex; align-items: center; padding-left: 9px; font-size: 19px; white-space: nowrap; }
.status > * { flex: none; }
.hint { width: 1272px; letter-spacing: .02px; }
.s-coord { width: 101px; letter-spacing: -.4px; }
.s-scale, .s-mag, .s-rot, .s-render { letter-spacing: -.5px; }
.field { height: 34px; border: 2px solid #bbb; border-radius: 3px; background: #fff; line-height: 30px; padding-left: 6px; position: relative; letter-spacing: -.3px; }
.f-coord { width: 393px; text-align: center; padding: 0; }
.mouse { margin-left: 7px; }
.s-scale { margin-left: 20px; width: 53px; }
.f-scale { width: 150px; }
.lock { margin-left: 12px; }
.s-mag { margin-left: 25px; width: 87px; }
.f-mag { width: 123px; }
.s-rot { margin-left: 15px; width: 86px; }
.check { margin-left: 12px; }
.s-render { margin-left: 11px; width: 91px; }
.s-epsg { margin-left: 6px; width: 192px; }
.drop { position: absolute; right: 0; top: 0; bottom: 0; width: 24px; border-left: 2px solid #c4c4c4; background: linear-gradient(#fafafa, #e2e2e2); }
.drop::after { content: ""; position: absolute; left: 5px; top: calc(50% - 4px); border: 6px solid transparent; border-top: 8px solid #000; border-bottom: 0; }
.spin { position: absolute; right: 0; top: 0; bottom: 0; width: 24px; border-left: 2px solid #c4c4c4; background: linear-gradient(#f6f6f6 46%, #bbb 47% 53%, #ececec 54%); }
.spin::before, .spin::after { content: ""; position: absolute; left: 5px; border: 6px solid transparent; }
.spin::before { top: 4px; border-top: 0; border-bottom: 7px solid #000; }
.spin::after { bottom: 3px; border-bottom: 0; border-top: 7px solid #000; }

.taskbar { height: 77px; background: #20170f; display: flex; color: #fff; }
.apps { display: flex; margin-left: -1px; }
.apps span { width: 95.3px; display: flex; align-items: center; justify-content: center; }
.apps svg { width: 46px; height: 46px; }
.apps .on { background: linear-gradient(#76b9ed, #76b9ed) bottom/78px 5px no-repeat; }
.apps .active { background: linear-gradient(#76b9ed, #76b9ed) bottom/94px 5px no-repeat, #504943; }
.adobe { width: 43px; height: 42px; border: 3px solid; font: bold 24px/34px "Open Sans", sans-serif; text-align: center; letter-spacing: -1px; }
.id { color: #ee3d9b; background: #2e0618; }
.ps { color: #7cc1fb; background: #0c0a4b; }
.ai { color: #ffa62b; background: #2b1600; }
.cmd { font: 11px "Liberation Mono", monospace; fill: #ddd; }
.tray { display: flex; align-items: center; margin-left: auto; width: 604px; }
.lang { width: 48px; margin-left: 5px; font: 22px/1 "Open Sans", sans-serif; letter-spacing: -.6px; }
.clock { width: 160px; margin-left: -3px; text-align: center; font: 22px/35px "Open Sans", sans-serif; letter-spacing: -.3px; display: flex; flex-direction: column; }
.notes { margin: 8px 0 0 12px; }
.count { font: bold 20px "Open Sans", sans-serif; fill: #fff; }
.peek { margin-left: auto; margin-right: 8px; width: 1px; height: 77px; background: #777; }

/* layer properties dialog */
.dialog { position: absolute; left: 102px; top: 20px; width: 1277px; height: 1476px; border: 2px solid #1c86d8; border-top-width: 3px; background: #efefef; box-shadow: 0 4px 32px rgba(0,0,0,.42); }
.dlg-title { height: 55px; background: #fff; display: flex; align-items: center; padding-left: 17px; font: 22px/1 "Open Sans", sans-serif; letter-spacing: -.25px; }
.dlg-title span { margin-left: 10px; }
.dlg-x { margin-left: auto; margin-right: 27px; }
.help { font: 22px "Open Sans", sans-serif; }
.dlg-main { display: flex; height: 1416px; }
.chapters { width: 230px; background: #5c5c5c; display: flex; flex-direction: column; flex: none; }
.chapters a { height: 52.4px; display: flex; align-items: center; padding-left: 7px; color: #fff; font-size: 18.5px; }
.chapters svg { width: 38px; height: 42px; margin-right: 11px; }
.chapters .sel { background: #efefef; color: #000; }
.chapters .sel svg { margin-right: 16px; }
.abc { font: bold 15px "Open Sans", sans-serif; fill: #333; }
.info { font: italic bold 32px "Liberation Serif", serif; fill: #fff; }
.content { width: 1043px; padding: 5px 5px 0 10px; font-size: 18.5px; }
.combo { position: relative; display: flex; align-items: center; height: 34px; border: 2px solid #b6b6b6; border-radius: 3px; background: linear-gradient(#fafafa, #dcdcdc); padding-left: 6px; flex: none; }
.combo.white { background: #fff; }
.r-symbol { height: 39px; padding-left: 12px; }
.r-symbol svg { margin-right: 8px; }
.r-tree { display: flex; margin-top: 12px; height: 153px; }
.tree { width: 510px; border: 2px solid #c0c0c0; background: #fff; }
.t1, .t2 { height: 25px; display: flex; align-items: center; }
.t1 { background: #efefef; padding-left: 8px; font-weight: bold; letter-spacing: -1px; }
.t2 { padding-left: 48px; }
.sw { width: 25px; height: 24px; margin: 0 8px 0 2px; background: #26dad7; border: 2px solid #17605f; }
.sw.blue { background: #29c4e2; border-color: #1a7c9c; }
.preview { width: 94px; height: 92px; margin: 31px 0 0 218px; border: 2px solid #000; background: #26dad7; }
.r-btns { display: flex; gap: 9.3px; margin: 14px 0 0 -1px; }
.btn { width: 53.5px; height: 47px; border: 2px solid #999; border-radius: 4px; background: linear-gradient(#fafafa, #dcdcdc); display: flex; align-items: center; justify-content: center; flex: none; }
hr { border: 0; margin: 0; height: 3px; background: linear-gradient(#999 60%, #fff 60%); }
.h1 { margin-top: 14px; }
.row { display: flex; align-items: center; }
.row > label { width: 160px; flex: none; white-space: nowrap; letter-spacing: 0; }
.row > label.wide { width: 256px; }
.r-unit { margin-top: 13px; }
.r-unit .combo { width: 868px; }
.r-trans { height: 44px; }
.row.r-trans > label { letter-spacing: .1px; }
.slider { width: 868px; height: 7px; border: 2px solid #999; border-left: 0; background: #f4f4f4; position: relative; }
.slider::before { content: ""; position: absolute; left: 0; top: -11px; width: 16px; height: 22px; border: 2px solid #8c8c8c; border-radius: 3px 3px 9px 9px; background: #f4f4f4; }
.colorbtn { width: 845px; height: 34px; border: 2px solid #999; border-radius: 3px; background: #fff; padding: 3px 4px 0 5px; }
.colorbtn i { height: 24px; border-radius: 3px; background: #26dad7; }
.mini { width: 21px; height: 34px; margin-left: 2px; border: 2px solid #999; border-radius: 3px; }
.h2 { margin-top: 113px; }
.r-group { margin-top: 9px; height: 43px; }
.row > label.grp { width: 157px; letter-spacing: .1px; }
.r-group .combo { width: 724px; }
.push { border: 2px solid #b6b6b6; border-radius: 3px; background: linear-gradient(#fdfdfd, #dadada); height: 43px; width: 142px; padding: 0; font: inherit; color: #000; display: flex; align-items: center; justify-content: center; flex: none; letter-spacing: -.1px; margin-left: 16px; }
.push.lib { margin-left: 5px; justify-content: flex-start; padding-left: 13px; }
.symbols { margin-top: 6px; height: 422px; border: solid #c0c0c0; border-width: 3px 2px; background: #fefefe; padding: 9px 0 0 12px; display: flex; gap: 11.8px; }
figure { margin: 0; width: 79px; overflow: hidden; font-size: 24px; letter-spacing: -.1px; }
figure svg { background: #eff3c7; outline: 2px solid #c9cca4; outline-offset: -2px; }
figure.w svg { background: #a5bfde; outline-color: #8299b0; }
figure.g svg { background: #b9dd69; outline-color: #98b854; }
figcaption { margin-top: 5px; width: 74px; height: 32px; line-height: 30px; display: flex; justify-content: safe center; }
.r-save { justify-content: flex-end; margin-top: 10px; }
.save { width: 108px; }
.adv { gap: 14px; padding-left: 15px; justify-content: flex-start; }
.r-head { margin-top: 21px; height: 22px; color: #333; }
.r-head b { font-weight: bold; font-size: 19.5px; margin: 0 11px 0 12px; white-space: nowrap; letter-spacing: .25px; }
.r-head hr { flex: 1; height: 3px; background: #8e8e8e; }
.tri { border: 9px solid transparent; border-top: 11px solid #333; border-bottom: 0; margin-left: 2px; }
.r-lt { margin-top: 13px; height: 32px; }
.r-lt .slider { width: 681px; margin-right: 11px; }
.spinbox { position: relative; width: 80px; height: 32px; border: 2px solid #b6b6b6; border-radius: 3px; background: #fff; padding: 6px 0 0 7px; }
.spinbox .spin { width: 29px; }
.r-lb { margin-top: 10px; }
.r-fb { margin-top: 11px; }
.r-lb .combo, .r-fb .combo { width: 250px; }
.box { width: 24px; height: 24px; border: 2px solid #bbb; background: #fff; margin-right: 8px; }
.r-de { margin-top: 11px; height: 44px; }
.r-cf { margin-top: 9px; height: 45px; letter-spacing: .1px; }
.row .btn { margin-left: auto; width: 49px; height: 44px; justify-content: flex-start; padding-left: 6px; }
.az { font: bold 17px "Liberation Mono", monospace; fill: #777; }
.r-end { margin-top: 23px; justify-content: flex-end; }
.push.style { margin: 0 auto 0 0; gap: 38px; padding-left: 30px; }
.ok { border-color: #777; }
```
